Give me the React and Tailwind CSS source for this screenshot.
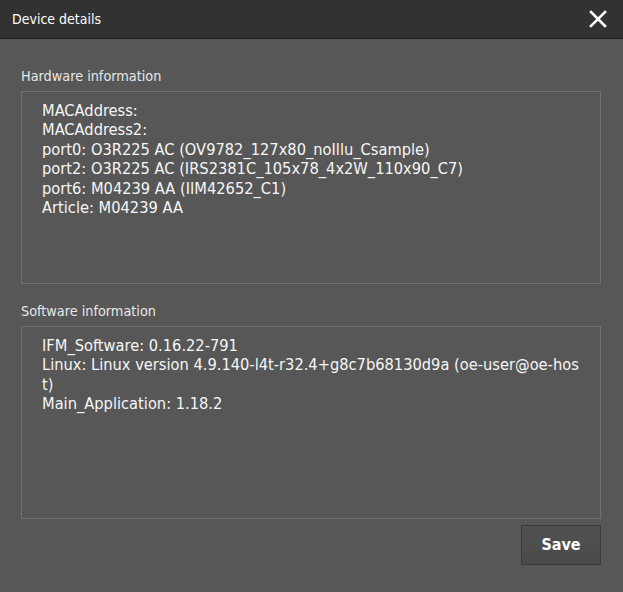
const hardware = [
  "MACAddress:",
  "MACAddress2:",
  "port0: O3R225 AC (OV9782_127x80_noIllu_Csample)",
  "port2: O3R225 AC (IRS2381C_105x78_4x2W_110x90_C7)",
  "port6: M04239 AA (IIM42652_C1)",
  "Article: M04239 AA",
];

const software = [
  "IFM_Software: 0.16.22-791",
  "Linux: Linux version 4.9.140-l4t-r32.4+g8c7b68130d9a (oe-user@oe-host)",
  "Main_Application: 1.18.2",
];

function InfoBox({ label, lines, className = "" }) {
  return (
    <section className={className}>
      <p className="mb-[5px] text-[14.3px] leading-[20px] text-[#e8e8e8]">{label}</p>
      <div className="h-[193px] border border-[#707070] pl-5 pr-[17px] pt-[9px] text-[16.3px] leading-[19.4px] text-[#f6f6f6] break-all">
        {lines.map((line) => (
          <p key={line}>{line}</p>
        ))}
      </div>
    </section>
  );
}

export default function App() {
  return (
    <div className="flex h-[592px] w-[623px] flex-col bg-[#575757] font-['DejaVu_Sans_Condensed','DejaVu_Sans',sans-serif]">
      <header className="flex h-[39px] shrink-0 items-center justify-between border-b border-[#222] bg-[#323232] pl-[12px] pr-[16px]">
        <h1 className="text-[14px] font-normal text-white">Device details</h1>
        <button type="button" aria-label="Close" className="text-white">
          <svg width="18" height="18" viewBox="0 0 18 18" fill="none" stroke="currentColor" strokeWidth="2.6" strokeLinecap="square">
            <path d="M2 2L16 16M16 2L2 16" />
          </svg>
        </button>
      </header>

      <div className="flex flex-1 flex-col pl-[21px] pr-[22px] pt-[27px]">
        <InfoBox label="Hardware information" lines={hardware} />
        <InfoBox label="Software information" lines={software} className="mt-[17px]" />
        <div className="mt-[6px] flex justify-end">
          <button
            type="button"
            className="h-10 w-20 border border-[#3a3a3a] bg-gradient-to-b from-[#515151] to-[#4a4a4a] text-[16px] font-bold text-white"
          >
            Save
          </button>
        </div>
      </div>
    </div>
  );
}
